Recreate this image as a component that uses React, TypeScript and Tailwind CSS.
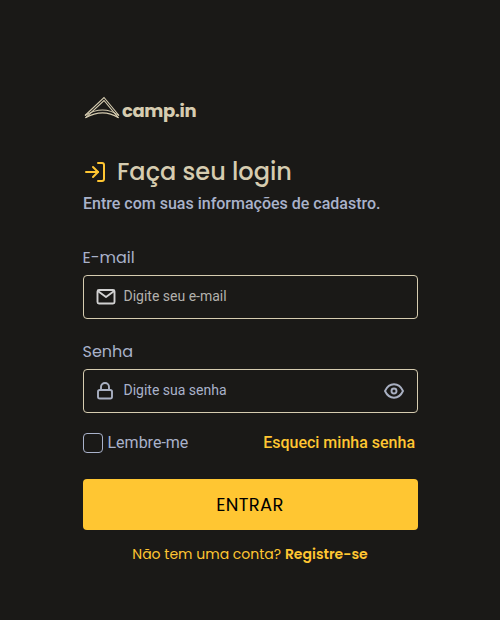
import type { ReactNode } from "react";
import { FiLogIn } from "react-icons/fi";

const geometric = "font-[Poppins,Inter,sans-serif] [font-feature-settings:'cv11']";

function Logo() {
  return (
    <div className="flex h-[30px] items-center text-[#d6ccb0]">
      <svg width="38" height="30" viewBox="0 0 38 30" fill="none" stroke="currentColor" strokeWidth="1.1">
        <path d="M2 22.500 21 4.500 36 22.500" />
        <path d="M2.500 24.800 21 7.500 35.500 24.800" />
        <path d="M2 22.500Q20 11.500 36 22.500M2.500 24.800Q20 15 35.500 24.800" />
      </svg>
      <span className={`${geometric} ml-px pt-[6px] text-[18px] leading-[30px] font-bold tracking-[-0.4px]`}>camp.in</span>
    </div>
  );
}

function Icon({ children, className = "" }: { children: ReactNode; className?: string }) {
  return (
    <svg width="24" height="24" viewBox="0 0 24 24" fill="none" stroke="currentColor" strokeWidth="1.9" strokeLinecap="round" strokeLinejoin="round" className={className}>
      {children}
    </svg>
  );
}

function MailIcon() {
  return (
    <Icon className="text-[#d1d1d1]">
      <rect x="3.500" y="5" width="17" height="13.500" rx="1.500" />
      <path d="m4.500 6.500 7.500 5.500 7.500-5.500" />
    </Icon>
  );
}

function LockIcon() {
  return (
    <Icon className="text-[#a9b0c2]">
      <rect x="4" y="11" width="14" height="8.500" rx="1.800" />
      <path d="M7 11V8a4 4 0 0 1 8 0v3" />
    </Icon>
  );
}

function EyeIcon() {
  return (
    <Icon className="-translate-x-px text-[#a9b0c2]">
      <path d="M3 12C5 7.700 8.200 5.300 12 5.300S19 7.700 21 12C19 16.300 15.800 18.700 12 18.700S5 16.300 3 12Z" />
      <circle cx="12" cy="12" r="2.500" />
    </Icon>
  );
}

function Field({ label, placeholder, icon, action, muted }: { label: string; placeholder: string; icon: ReactNode; action?: ReactNode; muted: string }) {
  return (
    <label className="block">
      <span className={`${geometric} -ml-[0.5px] block h-6 text-base leading-6 text-[#a9b2ca]`}>{label}</span>
      <span className={`mt-[5px] flex h-11 items-center rounded border border-[#d6ccb0] px-[10px] ${muted}`}>
        {icon}
        <span className="ml-[5.5px] flex-1 pb-[2px] text-sm">{placeholder}</span>
        {action}
      </span>
    </label>
  );
}

export default function App() {
  return (
    <main className="h-[620px] bg-[#1a1917] font-[Roboto,sans-serif]">
      <div className="ml-[83px] w-[335px] pt-[93px]">
        <Logo />
        <header className="mt-[31px]">
          <h1 className={`${geometric} flex h-9 items-center text-2xl font-medium text-[#d6ccb0]`}>
            <FiLogIn size={24} className="mr-[10px] -mt-px text-[#ffc632]" />
            Faça seu login
          </h1>
          <p className="mt-[2px] text-base leading-6 font-medium text-[#a9b2ca]">Entre com suas informações de cadastro.</p>
        </header>
        <form className="mt-[30px]">
          <Field label="E-mail" placeholder="Digite seu e-mail" muted="text-[#b3b1ad]" icon={<MailIcon />} />
          <div className="h-[21px]" />
          <Field label="Senha" placeholder="Digite sua senha" muted="text-[#a9b2ca]" icon={<LockIcon />} action={<EyeIcon />} />
          <div className="mt-[18px] flex h-6 items-center justify-between pr-[3px]">
            <label className="flex items-center gap-[4.5px] text-base text-[#a9b2ca]">
              <span className="size-5 rounded border border-[#a9b2ca]" />
              Lembre-me
            </label>
            <a className="text-base font-medium text-[#ffc632]">Esqueci minha senha</a>
          </div>
          <button type="button" className={`${geometric} mt-6 block h-[51px] w-full rounded bg-[#ffc632] pr-px text-lg tracking-[0.3px] text-black`}>ENTRAR</button>
        </form>
        <p className={`${geometric} mt-[13px] pr-px text-center text-sm leading-[22px] text-[#ffc632]`}>
          Não tem uma conta? <b className="font-semibold">Registre-se</b>
        </p>
      </div>
    </main>
  );
}
